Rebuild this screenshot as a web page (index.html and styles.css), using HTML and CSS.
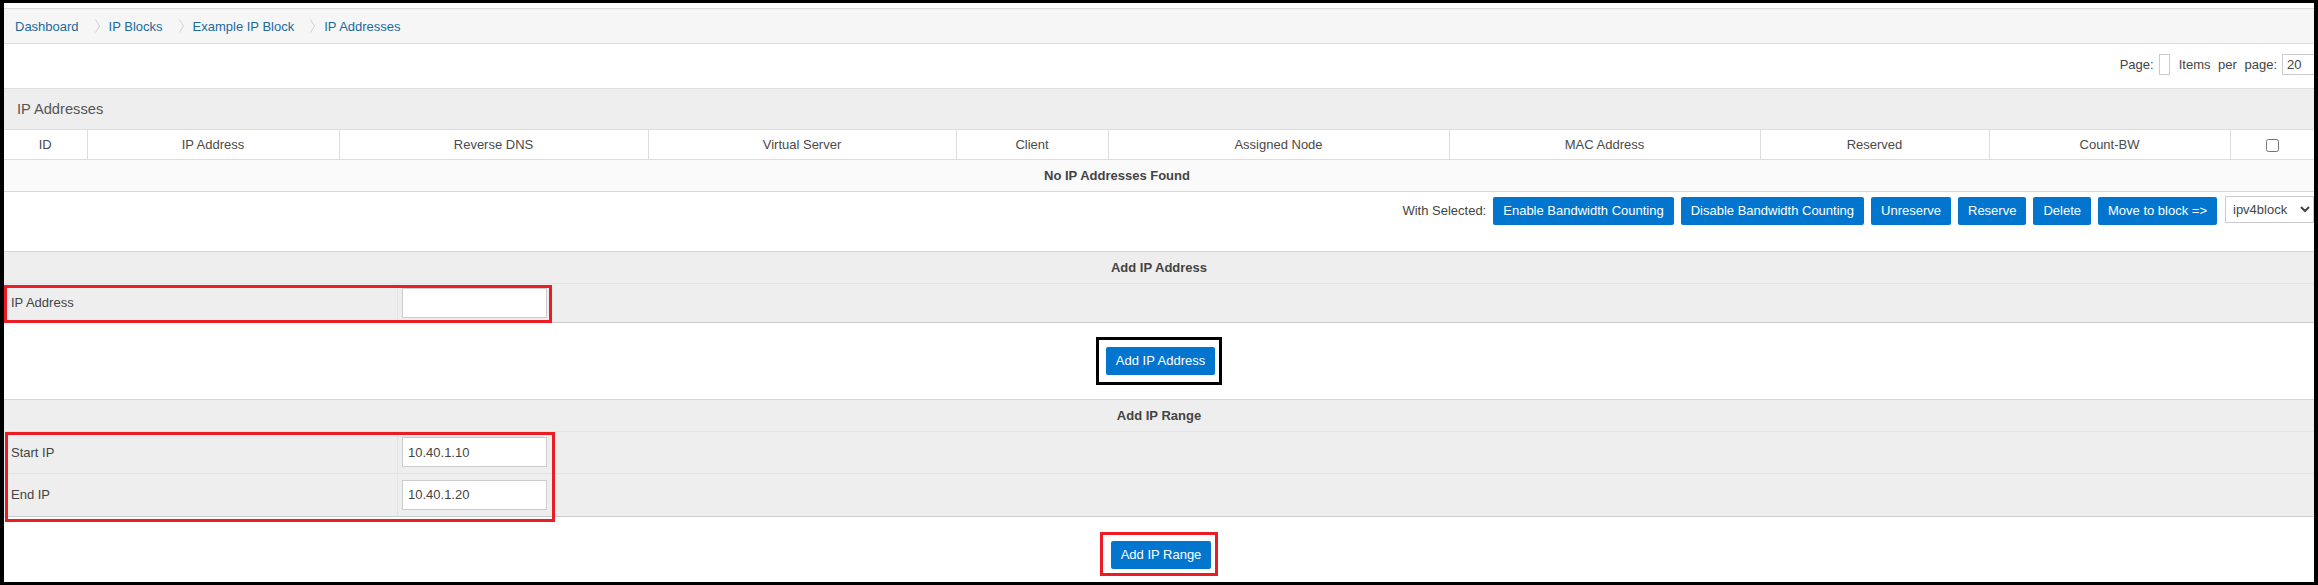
FILE: index.html
```html
<!DOCTYPE html>
<html lang="en">
<head>
  <meta charset="UTF-8" />
  <title>IP Addresses</title>
  <link rel="stylesheet" href="styles.css">
</head>
<body>
  <div class="frame">
    <nav class="crumbs">
      <a href="#">Dashboard</a>
      <svg class="sep" width="5" height="14" viewBox="0 0 5 14"><polyline points="0.5,0.5 4.5,7 0.5,13.5" /></svg>
      <a href="#">IP Blocks</a>
      <svg class="sep" width="5" height="14" viewBox="0 0 5 14"><polyline points="0.5,0.5 4.5,7 0.5,13.5" /></svg>
      <a href="#">Example IP Block</a>
      <svg class="sep" width="5" height="14" viewBox="0 0 5 14"><polyline points="0.5,0.5 4.5,7 0.5,13.5" /></svg>
      <a href="#">IP Addresses</a>
    </nav>

    <div class="pager">
      <span>Page:</span>
      <input type="text" class="page-box">
      <span class="per-page-label">Items per page:</span>
      <input type="text" class="per-page" value="20">
    </div>

    <section class="panel">
      <div class="panel-title">IP Addresses</div>
      <table class="ip-table">
        <colgroup>
          <col class="c-id"><col class="c-ip"><col class="c-rdns"><col class="c-vs"><col class="c-client">
          <col class="c-node"><col class="c-mac"><col class="c-res"><col class="c-bw"><col class="c-check">
        </colgroup>
        <thead>
          <tr>
            <th>ID</th>
            <th>IP Address</th>
            <th>Reverse DNS</th>
            <th>Virtual Server</th>
            <th>Client</th>
            <th>Assigned Node</th>
            <th>MAC Address</th>
            <th>Reserved</th>
            <th>Count-BW</th>
            <th><input type="checkbox" class="check-all"></th>
          </tr>
        </thead>
        <tbody>
          <tr class="empty-row">
            <td colspan="9">No IP Addresses Found</td>
            <td></td>
          </tr>
        </tbody>
      </table>

      <div class="bulk-actions">
        <span class="bulk-label">With Selected:</span>
        <button class="btn">Enable Bandwidth Counting</button>
        <button class="btn">Disable Bandwidth Counting</button>
        <button class="btn">Unreserve</button>
        <button class="btn">Reserve</button>
        <button class="btn">Delete</button>
        <button class="btn">Move to block =&gt;</button>
        <select class="block-select">
          <option>ipv4block</option>
        </select>
      </div>
    </section>

    <section class="add-form">
      <div class="form-title">Add IP Address</div>
      <div class="form-rows">
        <div class="form-row compact">
          <label class="form-label">IP Address</label>
          <div class="form-field"><input type="text" class="form-input"></div>
        </div>
        <div class="mark mark-ip"></div>
      </div>
      <div class="form-submit">
        <span class="ring ring-dark"><button class="btn">Add IP Address</button></span>
      </div>
    </section>

    <section class="add-form">
      <div class="form-title">Add IP Range</div>
      <div class="form-rows">
        <div class="form-row">
          <label class="form-label">Start IP</label>
          <div class="form-field"><input type="text" class="form-input" value="10.40.1.10"></div>
        </div>
        <div class="form-row tall">
          <label class="form-label">End IP</label>
          <div class="form-field"><input type="text" class="form-input" value="10.40.1.20"></div>
        </div>
        <div class="mark mark-range"></div>
      </div>
      <div class="form-submit low">
        <span class="ring ring-red"><button class="btn">Add IP Range</button></span>
      </div>
    </section>
  </div>
</body>
</html>
```

FILE: styles.css
```css
* {
  margin: 0;
  padding: 0;
  box-sizing: border-box;
}

body {
  font-family: "Liberation Sans", Arial, sans-serif;
  font-size: 13px;
  color: #444;
  background: #fff;
}

.frame {
  height: 585px;
  border: solid #000;
  border-width: 3px 4px;
  padding-top: 5px;
  overflow: hidden;
}

/* Breadcrumb */
.crumbs {
  display: flex;
  align-items: center;
  height: 36px;
  padding-left: 11px;
  background: #f6f6f6;
  border-top: 1px solid #ddd;
  border-bottom: 1px solid #ddd;
}

.crumbs a {
  color: #22699f;
  text-decoration: none;
}

.crumbs .sep {
  display: block;
  margin: 0 9px 0 16px;
  fill: none;
  stroke: #d0d0d0;
  stroke-width: 1;
}

/* Pager */
.pager {
  height: 44px;
  display: flex;
  justify-content: flex-end;
  align-items: flex-start;
  gap: 5px;
  padding-top: 10px;
  margin-right: -8px;
  line-height: 21px;
}

.per-page-label {
  word-spacing: 4px;
}

.page-box,
.per-page {
  height: 21px;
  border: 1px solid #ccc;
  font: inherit;
  color: #444;
  outline: none;
}

.page-box {
  width: 11px;
  margin-right: 4px;
}

.per-page {
  width: 40px;
  padding-left: 4px;
}

/* IP table */
.panel-title {
  height: 42px;
  display: flex;
  align-items: center;
  padding-left: 13px;
  background: #eee;
  border-top: 1px solid #ddd;
  border-bottom: 1px solid #ddd;
  font-size: 14.7px;
  color: #555;
}

.ip-table {
  width: 100%;
  border-collapse: collapse;
  table-layout: fixed;
}

.c-id { width: 83px; }
.c-ip { width: 252px; }
.c-rdns { width: 309px; }
.c-vs { width: 308px; }
.c-client { width: 152px; }
.c-node { width: 341px; }
.c-mac { width: 311px; }
.c-res { width: 229px; }
.c-bw { width: 241px; }
.c-check { width: 84px; }

.ip-table th {
  height: 29px;
  padding: 0;
  font-weight: normal;
  color: #4a4a4a;
  border-left: 1px solid #ddd;
  border-bottom: 1px solid #ddd;
}

.ip-table th:first-child {
  border-left: 0;
}

.check-all {
  width: 13px;
  height: 13px;
  margin: 0;
  vertical-align: middle;
}

.empty-row td {
  height: 32px;
  padding: 0;
  background: #fafafa;
  font-weight: bold;
  text-align: center;
  border-bottom: 1px solid #d6d6d6;
}

.bulk-actions {
  height: 59px;
  display: flex;
  justify-content: flex-end;
  align-items: flex-start;
  gap: 7px;
  padding-top: 5px;
}

.bulk-label {
  line-height: 28px;
}

.btn {
  height: 28px;
  padding: 0 10px;
  background: #0276cf;
  color: #fff;
  border: 0;
  border-radius: 2px;
  font: inherit;
  cursor: pointer;
}

.btn:hover {
  background: #0266b3;
}

.block-select {
  width: 89px;
  height: 27px;
  margin-left: 1px;
  margin-top: -1px;
  padding-left: 3px;
  border: 1px solid #ccc;
  border-radius: 0;
  background: #fff;
  font: inherit;
  color: #444;
}

/* Add forms */
.form-title {
  height: 33px;
  line-height: 31px;
  text-align: center;
  font-weight: bold;
  background: #eee;
  border-top: 1px solid #d6d6d6;
  border-bottom: 1px solid #e4e4e4;
}

.form-rows {
  position: relative;
  background: #eee;
  border-bottom: 1px solid #ccc;
}

.form-row {
  display: grid;
  grid-template-columns: 394px 160px;
  height: 41px;
}

.form-row.compact {
  height: 38px;
}

.form-row.tall {
  height: 43px;
  border-top: 1px solid #e4e4e4;
}

.form-label {
  display: flex;
  align-items: center;
  padding-left: 7px;
  border-right: 1px solid #e4e4e4;
  color: #444;
}

.form-field {
  display: flex;
  align-items: center;
  padding-left: 4px;
}

.form-input {
  width: 145px;
  height: 30px;
  padding: 0 5px;
  border: 1px solid #ccc;
  background: #fff;
  font: inherit;
  color: #444;
  outline: none;
}

/* highlight frames */
.mark {
  position: absolute;
  border: 3px solid #ec1c24;
  pointer-events: none;
}

.mark-ip {
  left: 0;
  top: 1px;
  width: 548px;
  height: 38px;
}

.mark-range {
  left: 1px;
  top: 0;
  width: 550px;
  height: 90px;
}

.form-submit {
  height: 76px;
  display: flex;
  justify-content: center;
  align-items: center;
}

.form-submit.low {
  height: 65px;
  align-items: flex-start;
  padding-top: 15px;
}

.ring {
  display: inline-flex;
  border: 3px solid;
}

.ring-dark {
  border-color: #000;
  padding: 7px 4px 7px 7px;
}

.ring-red {
  border-color: #ec1c24;
  padding: 6px 4px 4px 8px;
}
```
